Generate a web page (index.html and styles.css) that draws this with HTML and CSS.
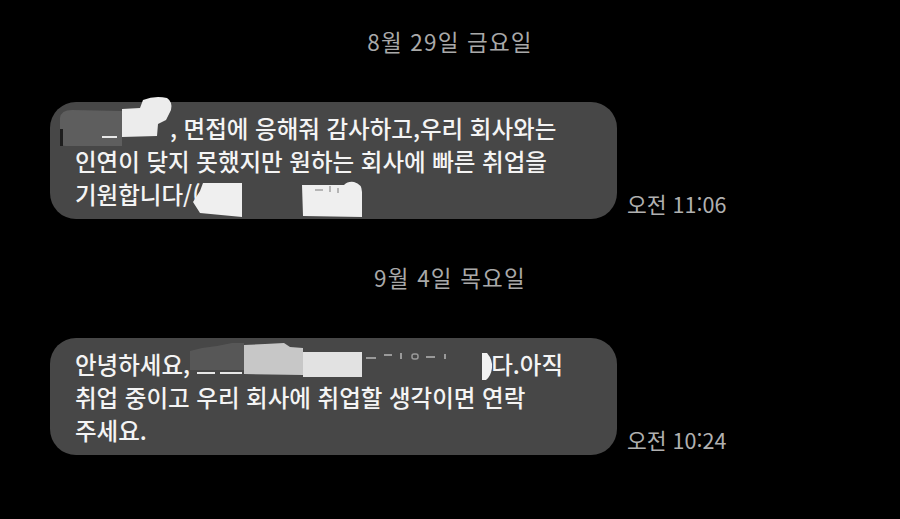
FILE: index.html
```html
<!DOCTYPE html>
<html lang="ko">
<head>
<meta charset="utf-8">
<title>메시지</title>
<link rel="stylesheet" href="styles.css">
</head>
<body>
<main class="thread">
  <div class="date">8월 29일 금요일</div>
  <div class="row row-first">
    <div class="bubble">
      <p class="msg"><span class="gap gap-a"></span>, 면접에 응해줘 감사하고,우리 회사와는<br>인연이 닺지 못했지만 원하는 회사에 빠른 취업을<br>기원합니다/(</p>
      <svg class="redact" width="567" height="117" viewBox="0 0 567 117" aria-hidden="true">
        <path d="M10,16 Q11,8 22,8 L72,9 L72,44 L16,44 Q10,44 10,38 Z" fill="#5e5e5e"/>
        <rect x="10" y="27" width="3" height="17" fill="#1e1e1e"/>
        <rect x="52" y="34" width="15" height="2" fill="#e8e8e8"/>
        <path d="M72,7 L90,6 L93,-2 Q105,-7 117,-4 Q123,0 121,8 L116,18 L108,22 L107,34 L72,35 Z" fill="#ececec"/>
        <path d="M153,81 L192,81 L192,115 L150,111 L143,100 L150,89 Z" fill="#efefef"/>
        <path d="M252,83 L294,83 Q298,79 304,80 Q312,82 312,90 L312,115 L253,114 Z" fill="#efefef"/>
        <rect x="265" y="87" width="8" height="2" fill="#b5b5b5"/>
        <rect x="279" y="84" width="2" height="6" fill="#b5b5b5"/>
        <rect x="287" y="86" width="2" height="5" fill="#b5b5b5"/>
      </svg>
    </div>
    <span class="time">오전 11:06</span>
  </div>
  <div class="date">9월 4일 목요일</div>
  <div class="row">
    <div class="bubble">
      <p class="msg">안녕하세요,<span class="gap gap-b"></span>다.아직<br>취업 중이고 우리 회사에 취업할 생각이면 연락<br>주세요.</p>
      <svg class="redact" width="567" height="117" viewBox="0 0 567 117" aria-hidden="true">
        <path d="M140,13 L152,10 L167,8 L182,5 L194,5 L194,32 L140,32 Z" fill="#575757"/>
        <rect x="147" y="34" width="18" height="2" fill="#e6e6e6"/>
        <rect x="170" y="34" width="22" height="2" fill="#e6e6e6"/>
        <path d="M194,7 L215,6 L234,5 L240,9 L253,10 L253,37 L194,36 Z" fill="#c7c7c7"/>
        <rect x="253" y="14" width="59" height="25" fill="#e2e2e2"/>
        <rect x="316" y="19" width="10" height="2" fill="#9a9a9a"/>
        <rect x="334" y="16" width="8" height="2" fill="#9a9a9a"/>
        <rect x="350" y="15" width="2" height="6" fill="#9a9a9a"/>
        <rect x="362" y="16" width="6" height="5" rx="2" fill="none" stroke="#9a9a9a" stroke-width="1.5"/>
        <rect x="376" y="18" width="9" height="2" fill="#9a9a9a"/>
        <rect x="394" y="16" width="2" height="5" fill="#9a9a9a"/>
        <path d="M432,15 L437,15 Q443,22 442,30 Q441,38 436,42 L432,42 Z" fill="#f2f2f2"/>
      </svg>
    </div>
    <span class="time">오전 10:24</span>
  </div>
</main>
</body>
</html>
```
FILE: styles.css
```css
html, body {
  margin: 0;
  padding: 0;
  background: #000;
}

body {
  width: 900px;
  height: 519px;
  overflow: hidden;
  font-family: "Noto Sans CJK KR", "Noto Sans", sans-serif;
}

.thread {
  display: flex;
  flex-direction: column;
  padding-top: 26px;
}

.date {
  text-align: center;
  font-size: 22.5px;
  line-height: 30px;
  letter-spacing: 1.2px;
  color: #a9a9a9;
  margin-bottom: 46px;
}

.row {
  display: flex;
  align-items: flex-end;
  gap: 10px;
  padding-left: 50px;
}

.row-first {
  margin-bottom: 43px;
}

.bubble {
  position: relative;
  width: 567px;
  box-sizing: border-box;
  padding: 10px 25px 8px;
  background: #474747;
  border-radius: 26px;
}

.msg {
  margin: 0;
  font-size: 23.5px;
  font-weight: 500;
  line-height: 33px;
  color: #f4f4f4;
  white-space: nowrap;
}

.gap {
  display: inline-block;
}

.gap-a {
  width: 95px;
}

.gap-b {
  width: 301px;
}

.redact {
  position: absolute;
  left: 0;
  top: 0;
  overflow: visible;
}

.time {
  font-size: 21.5px;
  line-height: 24px;
  color: #b0b0b0;
  margin-bottom: 3px;
  white-space: nowrap;
}
```
